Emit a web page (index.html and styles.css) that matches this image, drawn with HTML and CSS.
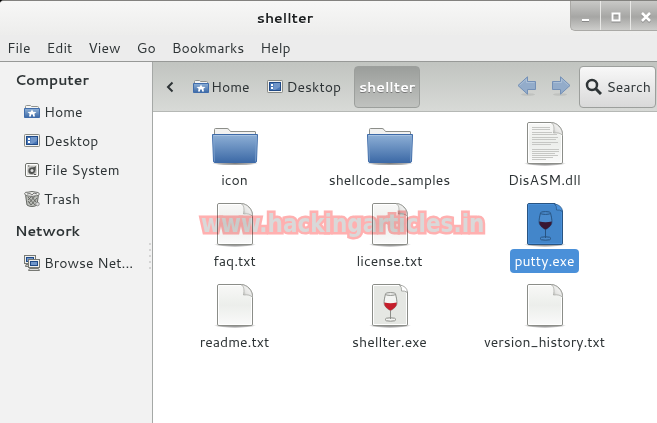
FILE: index.html
```html
<!DOCTYPE html>
<html lang="en">
<head>
<meta charset="utf-8">
<title>shellter</title>
<link rel="stylesheet" href="styles.css">
</head>
<body>
<svg class="defs" aria-hidden="true">
  <defs>
    <linearGradient id="blue" x1="0" y1="0" x2="0" y2="1"><stop offset="0" stop-color="#8eb0d6"/><stop offset="1" stop-color="#3c69a6"/></linearGradient>
    <linearGradient id="sheet" x1="0" y1="0" x2="0" y2="1"><stop offset="0" stop-color="#f8f8f7"/><stop offset=".5" stop-color="#eceeeb"/><stop offset="1" stop-color="#fafafa"/></linearGradient>
    <linearGradient id="curl" x1="0" y1="1" x2="1" y2="0"><stop offset="0" stop-color="#999b96"/><stop offset=".4" stop-color="#e4e4e2"/><stop offset="1" stop-color="#fff"/></linearGradient>
    <radialGradient id="shade"><stop offset="0" stop-color="#000" stop-opacity=".5"/><stop offset=".7" stop-color="#000" stop-opacity=".3"/><stop offset="1" stop-color="#000" stop-opacity="0"/></radialGradient>
  </defs>
  <symbol id="folder" viewBox="0 0 48 48">
    <ellipse cx="24" cy="43.500" rx="23" ry="2" fill="url(#shade)"/>
    <path d="M3.500 16V9.500Q3.500 8.500 4.500 8.500H16Q17 8.500 18 9.500L19.500 11.500H44Q44.500 11.500 44.500 12V16Z" fill="#f1f1f0" stroke="#8c8e89"/>
    <path d="M1.500 14.500H46.500L45.500 41Q45.500 42.500 44 42.500H4Q2.500 42.500 2.500 41Z" fill="url(#blue)" stroke="#3d6aa8"/>
    <path d="M2.500 15.500H45.500" stroke="#a6c1e0"/>
    <path d="M2.500 16L3.500 41.500M45.500 16L44.500 41.500" stroke="#8fb0d7" opacity=".6"/>
  </symbol>
  <symbol id="page" viewBox="0 0 48 48">
    <ellipse cx="24" cy="43.500" rx="21" ry="2.500" fill="url(#shade)"/>
    <path d="M8 2.500H30C36 2.500 41.500 8 41.500 14V42Q41.500 43.500 40 43.500H8Q6.500 43.500 6.500 42V4Q6.500 2.500 8 2.500Z" fill="url(#sheet)" stroke="#8b8d88"/>
    <path d="M30 3.500H8Q7.500 3.500 7.500 4V42Q7.500 42.500 8 42.500H40Q40.500 42.500 40.500 42V15" fill="none" stroke="#fff"/>
    <path d="M30 2.500C33 4 33.500 8 32.500 13C36.500 12.500 40 13 41.500 15.500C41.500 8 36 3 30 2.500Z" fill="url(#curl)" stroke="#a3a5a0" stroke-width=".7"/>
  </symbol>
  <symbol id="lines" viewBox="0 0 48 48">
    <path d="M11 7.500H29M11 9.500H29M11 12.500H31M11 14.500H36M11 17.500H37M11 19.500H35M11 22.500H37M11 24.500H30M11 29.500H38M11 31.500H38M11 33.500H34M11 35.500H37M11 37.500H32M11 39.500H25" stroke="#c6c7c4"/>
  </symbol>
  <symbol id="exe" viewBox="0 0 48 48">
    <ellipse cx="24" cy="43.500" rx="21" ry="2.500" fill="url(#shade)"/>
    <path class="exe-sheet" d="M8 2.500H34L41.500 10V42Q41.500 43.500 40 43.500H8Q6.500 43.500 6.500 42V4Q6.500 2.500 8 2.500Z"/>
    <path class="exe-rim" d="M34 3.500H7.500V42.500H40.500V11" fill="none"/>
    <path class="exe-curl" d="M33.500 3Q36 5 35.500 9Q39 8.500 41.500 10.500Q41 4 33.500 3Z"/>
    <ellipse class="exe-line" cx="24.500" cy="37.500" rx="5.500" ry="1.700"/>
    <path class="exe-line" d="M24.500 28V37"/>
    <path class="exe-line" d="M19.500 12C18 18 17.500 22 19 24Q21 27 24.500 28.500Q28 27 30 24C31.500 22 31 18 29.500 12Z"/>
    <path class="exe-wine" d="M18.300 20.500Q24.500 22 30.700 20.500C31 25 27 27 24.500 28.500C22 27 18 25 18.300 20.500Z"/>
    <ellipse class="exe-line" cx="24.500" cy="12" rx="5" ry="1.400"/>
  </symbol>
  <symbol id="home" viewBox="0 0 16 16">
    <path d="M1.500 6V2.500Q1.500 1.500 2.500 1.500H6.500L7.500 2.500H13.500Q14.500 2.500 14.500 3.500V6Z" fill="#f4f4f3" stroke="#92948f"/>
    <path d="M.5 4.500H15.500V13.500H.5Z" fill="url(#blue)" stroke="#3f6cab"/>
    <path d="M8 5.500L9.200 7.700L12.500 8L10.400 9.800L11 12.500H9V10.500H7V12.500H5L5.600 9.800L3.500 8L6.800 7.700Z" fill="#fff"/>
  </symbol>
  <symbol id="desktop" viewBox="0 0 16 16">
    <rect x=".5" y="1.500" width="15" height="12" rx=".8" fill="#f3f3f0" stroke="#888a85"/>
    <rect x="2.500" y="3.500" width="11" height="8" fill="#4775b5" stroke="#204a87"/>
    <path d="M7 4H13V8L8 11H6Z" fill="#6f95c9"/>
    <path d="M4 5H6V7H4ZM4 8H6V10H4Z" fill="#fff"/>
  </symbol>
  <symbol id="disk" viewBox="0 0 16 16">
    <rect x="1.500" y="1.500" width="13" height="13" rx="1.500" fill="#deded9" stroke="#6e706b"/>
    <rect x="2.500" y="2.500" width="11" height="11" rx=".5" fill="none" stroke="#fff"/>
    <circle cx="8" cy="8.500" r="4.300" fill="#aaa"/>
    <path d="M4.500 9C4.500 6 7 5 9 5.500L12 4L11.500 7.500C11 11 9 12.500 7 12C5 11.500 4.500 10.500 4.500 9Z" fill="#50524f"/>
    <circle cx="8" cy="8.500" r="1.500" fill="#ddd"/><path d="M4 4H5.500M10 12.500H12" stroke="#555"/>
  </symbol>
  <symbol id="trash" viewBox="0 0 16 16">
    <path d="M1.500 3.500L3 14Q5 15.500 8 15.500T13 14L14.500 3.500Z" fill="#bdbfba" stroke="#666864"/>
    <path d="M4 6L11 14M7 5L12 11M4 10L7 14M11 5L5 12M13 7L7 14M8 5L4 9" stroke="#555753" stroke-width=".8"/>
    <path d="M.6 2.500Q1 .8 4 1.200Q8 -.3 12 1.200Q15 1 15.400 3Q15 5 12.500 4.700Q8 6 4 5Q1 5 .6 2.500Z" fill="#e9e9e6" stroke="#70726e"/>
    <path d="M3 3L6 2.500L8 4L10 2L13 3" fill="none" stroke="#777"/>
    <circle cx="13.500" cy="13" r="1.800" fill="#ddd" stroke="#777" stroke-width=".7"/>
  </symbol>
  <symbol id="network" viewBox="0 0 16 16">
    <rect x=".5" y=".5" width="11" height="8" fill="#eeeeec" stroke="#777974"/><rect x="2.500" y="2.500" width="7" height="4" fill="#6f95c9" stroke="#204a87"/>
    <path d="M2 9.500H5V11.500H1.500Z" fill="#ccc" stroke="#777974"/>
    <rect x="4.500" y="4.500" width="11" height="8" fill="#eeeeec" stroke="#777974"/><rect x="6.500" y="6.500" width="7" height="4" fill="#6f95c9" stroke="#204a87"/>
    <path d="M5.500 13.500H14.500L15.500 15.500H4.500Z" fill="#ddd" stroke="#777974"/>
  </symbol>
  <symbol id="arrow" viewBox="0 0 20 20">
    <ellipse cx="11" cy="18.500" rx="7" ry="1.300" fill="#000" opacity=".08"/>
    <path d="M1 9.500L10.500 .8V5.500H18.500V13.500H10.500V18.200Z" fill="#93acca" stroke="#7490b6"/>
    <path d="M2.500 9.500L9.500 3V6.500H17.500" fill="none" stroke="#abc0d8"/>
  </symbol>
</svg>

<div class="window">
  <header class="titlebar">
    <h1 class="title">shellter</h1>
    <div class="controls">
      <button type="button" aria-label="Minimize"><svg width="10" height="10"><path d="M1 8H8" stroke="#fff" stroke-width="2"/></svg></button>
      <button type="button" aria-label="Maximize"><svg width="10" height="10"><path d="M1.500 1.500H8.500V8.500H1.500Z" fill="none" stroke="#fff" stroke-width="2"/></svg></button>
      <button type="button" aria-label="Close"><svg width="10" height="10"><path d="M1 1L9 9M9 1L1 9" stroke="#fff" stroke-width="2.500"/></svg></button>
    </div>
  </header>
  <nav class="menubar" aria-label="Menu">
    <button type="button">File</button>
    <button type="button">Edit</button>
    <button type="button">View</button>
    <button type="button">Go</button>
    <button type="button">Bookmarks</button>
    <button type="button">Help</button>
  </nav>
  <div class="body">
    <nav class="sidebar" aria-label="Places">
      <h2>Computer</h2>
      <a href="#"><svg class="small"><use href="#home"/></svg>Home</a>
      <a href="#"><svg class="small"><use href="#desktop"/></svg>Desktop</a>
      <a href="#"><svg class="small"><use href="#disk"/></svg>File System</a>
      <a href="#"><svg class="small"><use href="#trash"/></svg>Trash</a>
      <h2>Network</h2>
      <a href="#"><svg class="small"><use href="#network"/></svg>Browse Net...</a>
      <div class="grip"></div>
    </nav>
    <main class="content">
      <div class="toolbar">
        <button type="button" class="flat scroll" aria-label="Scroll path"><svg width="8" height="12"><path d="M6.500 1.500L2 6L6.500 10.500" fill="none" stroke="#2e3436" stroke-width="2"/></svg></button>
        <button type="button" class="flat"><svg class="small"><use href="#home"/></svg>Home</button>
        <button type="button" class="flat desk"><svg class="small"><use href="#desktop"/></svg>Desktop</button>
        <button type="button" class="current">shellter</button>
        <div class="history">
          <button type="button" class="flat" aria-label="Back"><svg width="20" height="20"><use href="#arrow"/></svg></button>
          <button type="button" class="flat" aria-label="Forward"><svg class="flip" width="20" height="20"><use href="#arrow"/></svg></button>
        </div>
        <button type="button" class="search"><svg width="17" height="17"><circle cx="7" cy="7" r="5" fill="none" stroke="#2e3436" stroke-width="2.500"/><path d="M10.500 10.500L16 16" stroke="#2e3436" stroke-width="3"/></svg>Search</button>
      </div>
      <div class="files">
        <a href="#" class="file"><svg class="large"><use href="#folder"/></svg><span>icon</span></a>
        <a href="#" class="file"><svg class="large"><use href="#folder"/></svg><span>shellcode_samples</span></a>
        <a href="#" class="file"><svg class="large"><use href="#page"/><use href="#lines"/></svg><span>DisASM.dll</span></a>
        <a href="#" class="file"><svg class="large"><use href="#page"/></svg><span>faq.txt</span></a>
        <a href="#" class="file"><svg class="large"><use href="#page"/></svg><span>license.txt</span></a>
        <a href="#" class="file selected"><svg class="large"><use href="#exe"/></svg><span>putty.exe</span></a>
        <a href="#" class="file"><svg class="large"><use href="#page"/></svg><span>readme.txt</span></a>
        <a href="#" class="file"><svg class="large"><use href="#exe"/></svg><span>shellter.exe</span></a>
        <a href="#" class="file"><svg class="large"><use href="#page"/></svg><span>version_history.txt</span></a>
        <div class="watermark">www.hackingarticles.in</div>
      </div>
    </main>
  </div>
</div>
</body>
</html>
```
FILE: styles.css
```css
* { box-sizing: border-box; }

body {
  margin: 0;
  background: #000;
  color: #2e3436;
  font: 14px/20px Cantarell, "Noto Sans", "Open Sans", sans-serif;
}

button {
  margin: 0;
  padding: 0;
  border: 0;
  background: none;
  color: inherit;
  font: inherit;
}

a { color: inherit; text-decoration: none; }
svg { display: block; flex: none; }
h1, h2 { margin: 0; font-size: 14px; }

.defs { position: absolute; width: 0; height: 0; }
.small { width: 16px; height: 16px; }
.large { width: 48px; height: 48px; }
.flip { transform: scaleX(-1); }

.window {
  display: flex;
  flex-direction: column;
  min-height: 100vh;
  border-top: 1px solid #83827f;
  border-radius: 4px 0 0 0;
  background: #ececec;
  overflow: hidden;
}

.titlebar {
  display: flex;
  height: 34px;
  background: linear-gradient(#f7f7f6, #ededec);
}

.title {
  flex: 1;
  padding-top: 7px;
  text-align: center;
  color: #1c1f20;
  text-shadow: 0 1px #fff;
}

.controls {
  display: flex;
  width: 87px;
  height: 30px;
  border: solid #aaa9a6;
  border-width: 0 0 1px 1px;
  border-radius: 0 0 0 5px;
  background: linear-gradient(#c9c9c7, #a6a6a4 55%, #cdcdcb);
  overflow: hidden;
}

.controls button {
  display: flex;
  flex: none;
  align-items: center;
  justify-content: center;
  width: 30px;
  padding-top: 2px;
  border-right: 1px solid #e8e8e6;
}

.controls svg { filter: drop-shadow(0 1px 0 #888); }
.controls button:last-child { border: 0; }

.menubar {
  display: flex;
  gap: 16px;
  height: 27px;
  padding: 3px 7px;
  border-bottom: 1px solid #979997;
}

.body { display: flex; flex: 1; }

.sidebar {
  position: relative;
  width: 153px;
  border-right: 1px solid #a5a8a6;
  background: #f2f2f2;
}

.sidebar h2 { padding: 8px 15px 7px; }

.sidebar a {
  display: flex;
  align-items: center;
  gap: 4px;
  height: 29px;
  padding-left: 24px;
  white-space: nowrap;
}

.grip {
  position: absolute;
  right: 1px;
  top: 181px;
  width: 2px;
  height: 27px;
  background: repeating-linear-gradient(#d4d4d4 0 2px, transparent 2px 6px);
}

.content { flex: 1; min-width: 0; background: #fff; }

.toolbar {
  display: flex;
  align-items: center;
  height: 50px;
  padding-left: 13px;
  border-bottom: 1px solid #b5b8b5;
  background: linear-gradient(#c1c4c0, #d8dad7);
}

.flat { display: flex; align-items: center; gap: 2px; }
.scroll { margin-right: 19px; }
.desk { gap: 4px; margin-left: 17px; }

.current,
.search {
  height: 42px;
  border: 1px solid #9c9f9c;
  border-radius: 4px;
}

.current {
  margin-left: 13px;
  padding: 0 4px;
  background: linear-gradient(#9b9e9b, #c0c2bf);
  color: #fff;
  font-weight: bold;
  text-shadow: 0 1px #777;
}

.history { display: flex; gap: 14px; margin: 0 8px 2px auto; }

.search {
  display: flex;
  align-items: center;
  gap: 4px;
  margin-right: 1px;
  padding: 0 4px 0 5px;
  background: linear-gradient(#f8f8f8, #d9d9d9);
}

.files {
  position: relative;
  display: grid;
  grid-template-columns: repeat(3, 155px);
  row-gap: 9px;
  padding: 8px 4px;
}

.file {
  --sheet: #e5e7e3;
  --edge: #8b8d88;
  --rim: #fff;
  --glass: #f4f5f3;
  --wine: #c51f2c;
  display: flex;
  flex-direction: column;
  align-items: center;
}

.selected {
  --sheet: #4386ca;
  --edge: #285482;
  --rim: #4a90d9;
  --glass: #4a8bcd;
  --wine: #391733;
}

.file span { padding: 2px 4px; border-radius: 4px; white-space: nowrap; }
.selected span { background: #4a90d9; color: #fff; }

.exe-sheet { fill: var(--sheet); stroke: var(--edge); }
.exe-rim { stroke: var(--rim); }
.exe-curl { fill: var(--rim); stroke: var(--edge); stroke-width: .7; }
.exe-line { fill: var(--glass); stroke: var(--edge); }
.exe-wine { fill: var(--wine); }

.watermark {
  position: absolute;
  left: 48px;
  top: 94px;
  color: #d9d9d9;
  font: bold 24px/36px "DejaVu Sans Condensed", "Noto Sans", sans-serif;
  -webkit-text-stroke: 5px #ffb0b0;
  paint-order: stroke fill;
  stroke-linejoin: round;
  mix-blend-mode: multiply;
  pointer-events: none;
}
```
